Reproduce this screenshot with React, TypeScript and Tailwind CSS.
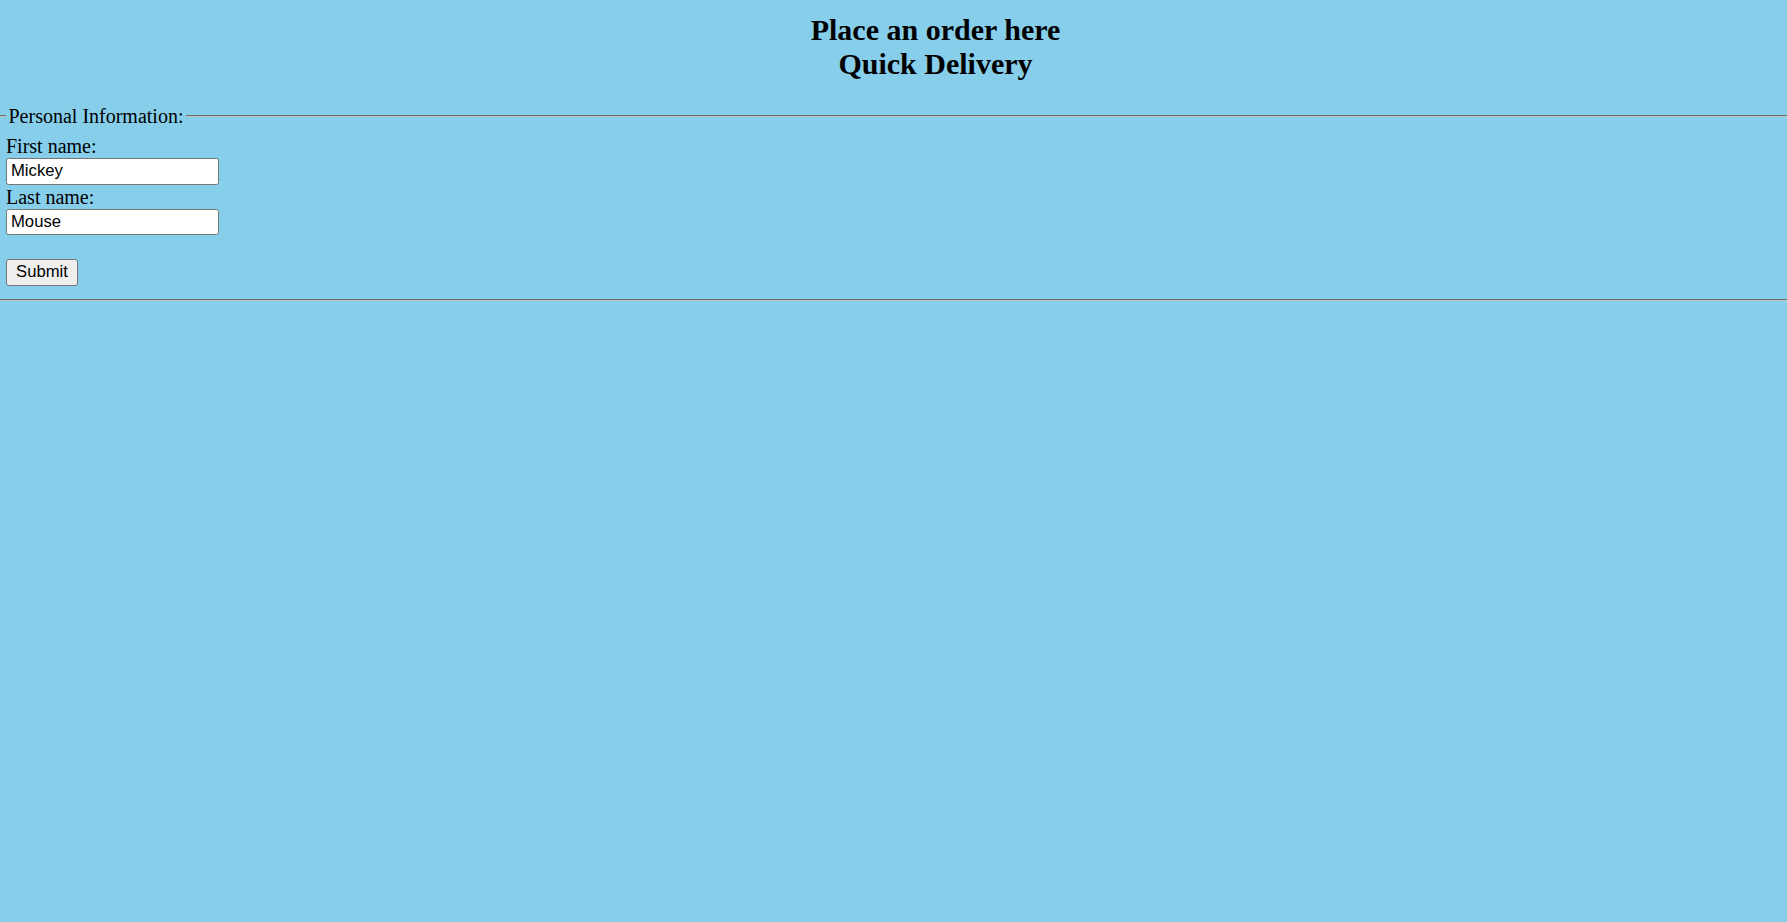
import { useState } from "react";

const serif = { fontFamily: '"Liberation Serif", "Times New Roman", serif' };

export default function App() {
    const [first, setFirst] = useState("Mickey");
    const [last, setLast] = useState("Mouse");

    return (
        <div className="min-h-screen bg-[#87CEEB] text-black flow-root font-['Liberation_Serif',serif]">
            <h2 className="mt-[12.5px] mb-[23px] pl-[84px] text-center text-[30px] leading-[34.5px] font-bold">
                Place an order here
                <br />
                Quick Delivery
            </h2>
            <form onSubmit={(e) => e.preventDefault()}>
                <fieldset className="m-0 border-x-0 border-y-2 [border-style:groove] border-[#c0c0c0] px-[6px] pt-[7px] pb-[12.5px] min-w-0">
                    <legend className="px-[2.5px] text-[20px] leading-[23px]" style={serif}>
                        Personal Information:
                    </legend>
                    <div className="flex flex-col items-start text-[20px]" style={serif}>
                        <label htmlFor="fname" className="leading-[23.5px] h-[23.5px]">First name:</label>
                        <input
                            id="fname"
                            value={first}
                            onChange={(e) => setFirst(e.target.value)}
                            className="w-[213px] h-[26.5px] bg-white border border-[#767676] rounded-[2.5px] px-[4px] text-[16.67px] leading-none font-['Liberation_Sans',Arial,sans-serif] outline-none"
                        />
                        <label htmlFor="lname" className="leading-[24px] h-[24px]">Last name:</label>
                        <input
                            id="lname"
                            value={last}
                            onChange={(e) => setLast(e.target.value)}
                            className="w-[213px] h-[26.5px] bg-white border border-[#767676] rounded-[2.5px] px-[4px] text-[16.67px] leading-none font-['Liberation_Sans',Arial,sans-serif] outline-none"
                        />
                        <button
                            type="submit"
                            className="mt-[24px] w-[72px] h-[27px] bg-[#efefef] border border-[#767676] rounded-[3px] text-center text-[16.67px] leading-none font-['Liberation_Sans',Arial,sans-serif]"
                        >
                            Submit
                        </button>
                    </div>
                </fieldset>
            </form>
        </div>
    );
}
